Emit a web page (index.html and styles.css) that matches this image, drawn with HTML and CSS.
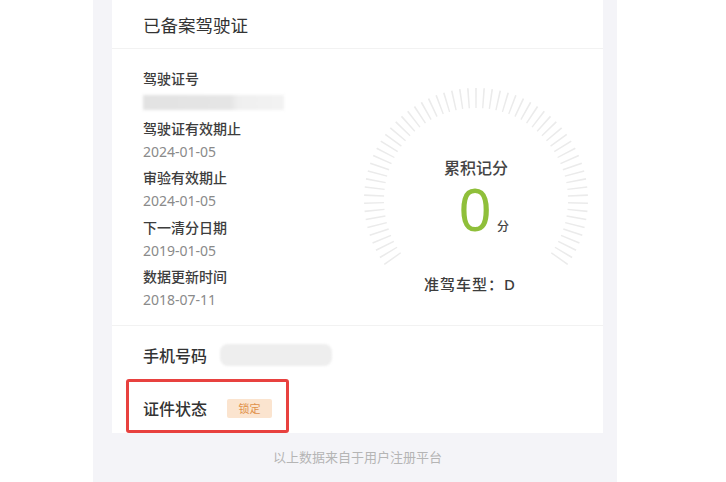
FILE: index.html
```html
<!DOCTYPE html>
<html lang="zh-CN">
<head>
<meta charset="utf-8">
<title>已备案驾驶证</title>
<link rel="stylesheet" href="styles.css">
</head>
<body>
<div class="panel">
  <div class="card">
    <div class="card-head">已备案驾驶证</div>
    <div class="card-body">
      <div class="info">
        <div class="pair"><div class="label">驾驶证号</div><div class="value value-masked"><div class="mask mask-id"></div></div></div>
        <div class="pair"><div class="label">驾驶证有效期止</div><div class="value">2024-01-05</div></div>
        <div class="pair"><div class="label">审验有效期止</div><div class="value">2024-01-05</div></div>
        <div class="pair"><div class="label">下一清分日期</div><div class="value">2019-01-05</div></div>
        <div class="pair"><div class="label">数据更新时间</div><div class="value">2018-07-11</div></div>
      </div>
      <div class="gauge">
        <svg class="dial" width="230" height="230" viewBox="0 0 230 230">
          <path d="M 33.54 176.38 A 102 102 0 1 1 196.46 176.38" pathLength="254" fill="none" stroke="#ebebeb" stroke-width="20" stroke-dasharray="0.85 3.3167" stroke-dashoffset="-1.575"/>
        </svg>
        <div class="gauge-text">
          <div class="gauge-title">累积记分</div>
          <div class="score"><span class="score-num">0</span><span class="score-unit">分</span></div>
          <div class="gauge-type">准驾车型：D</div>
        </div>
      </div>
    </div>
    <div class="row phone"><span class="row-label">手机号码</span><span class="mask mask-phone"></span></div>
    <div class="row status"><span class="row-label">证件状态</span><span class="badge">锁定</span></div>
  </div>
  <div class="footer">以上数据来自于用户注册平台</div>
</div>
</body>
</html>
```
FILE: styles.css
```css
html, body {
  margin: 0;
  padding: 0;
  background: #ffffff;
}
body {
  font-family: "Noto Sans", "Noto Sans CJK SC", sans-serif;
}
.panel {
  margin-left: 93px;
  width: 524px;
  height: 482px;
  background: #f4f4f8;
  overflow: hidden;
}
.card {
  margin-left: 19px;
  width: 491px;
  background: #ffffff;
}
.card-head {
  box-sizing: border-box;
  height: 49px;
  padding: 15px 0 0 31px;
  font-size: 17.5px;
  line-height: 21px;
  color: #333333;
  border-bottom: 1px solid #f2f2f2;
}
.card-body {
  box-sizing: border-box;
  display: flex;
  height: 277px;
  border-bottom: 1px solid #f2f2f2;
}
.info {
  padding: 18px 0 0 31px;
}
.pair {
  margin-bottom: 3.5px;
}
.label {
  font-size: 14px;
  line-height: 24px;
  color: #3d3d3d;
  font-weight: 500;
}
.value {
  height: 22px;
  font-size: 14px;
  line-height: 22px;
  color: #8a8a8a;
}
.value-masked {
  display: flex;
  align-items: center;
}
.mask-id {
  width: 141px;
  height: 15px;
  background: linear-gradient(90deg, #e2e2e2 0%, #e5e5e5 62%, #efefef 67%, #f2f2f2 100%);
  filter: blur(1.5px);
}
.gauge {
  display: grid;
  width: 230px;
  height: 230px;
  margin: 36px 12px 0 auto;
}
.dial, .gauge-text {
  grid-area: 1 / 1;
}
.gauge-text {
  display: flex;
  flex-direction: column;
  align-items: center;
  padding-top: 72px;
}
.gauge-title {
  font-size: 16px;
  line-height: 22px;
  color: #444444;
  font-weight: 500;
}
.score {
  display: flex;
  align-items: baseline;
  margin-top: 1px;
  padding-left: 15.5px;
}
.score-num {
  font-size: 58px;
  line-height: 58px;
  color: #8fbf3a;
}
.score-unit {
  margin-left: 5.5px;
  font-size: 12px;
  color: #444444;
  font-weight: 500;
}
.gauge-type {
  margin-top: 36px;
  padding-right: 12px;
  font-size: 15px;
  line-height: 20px;
  letter-spacing: 1px;
  color: #3d3d3d;
  font-weight: 500;
}
.row {
  display: flex;
  align-items: center;
}
.row-label {
  font-size: 16px;
  color: #333333;
  font-weight: 500;
}
.phone {
  height: 24px;
  padding: 17px 0 0 31px;
}
.mask-phone {
  margin-left: 13px;
  width: 112px;
  height: 22px;
  border-radius: 8px;
  background: #eeeeee;
  filter: blur(1px);
}
.status {
  box-sizing: border-box;
  width: 163px;
  height: 54px;
  margin: 12px 0 -1px 14px;
  padding: 4px 0 0 14px;
  border: 3px solid #e8413f;
  border-radius: 3px;
}
.badge {
  margin-left: 20px;
  width: 45px;
  height: 19px;
  line-height: 19px;
  text-align: center;
  font-size: 11px;
  color: #e0914a;
  background: #fbe4cf;
  border-radius: 2px;
}
.footer {
  margin-left: 19px;
  width: 491px;
  padding-top: 15px;
  line-height: 20px;
  font-size: 13px;
  text-align: center;
  color: #b5b5b5;
}
```
